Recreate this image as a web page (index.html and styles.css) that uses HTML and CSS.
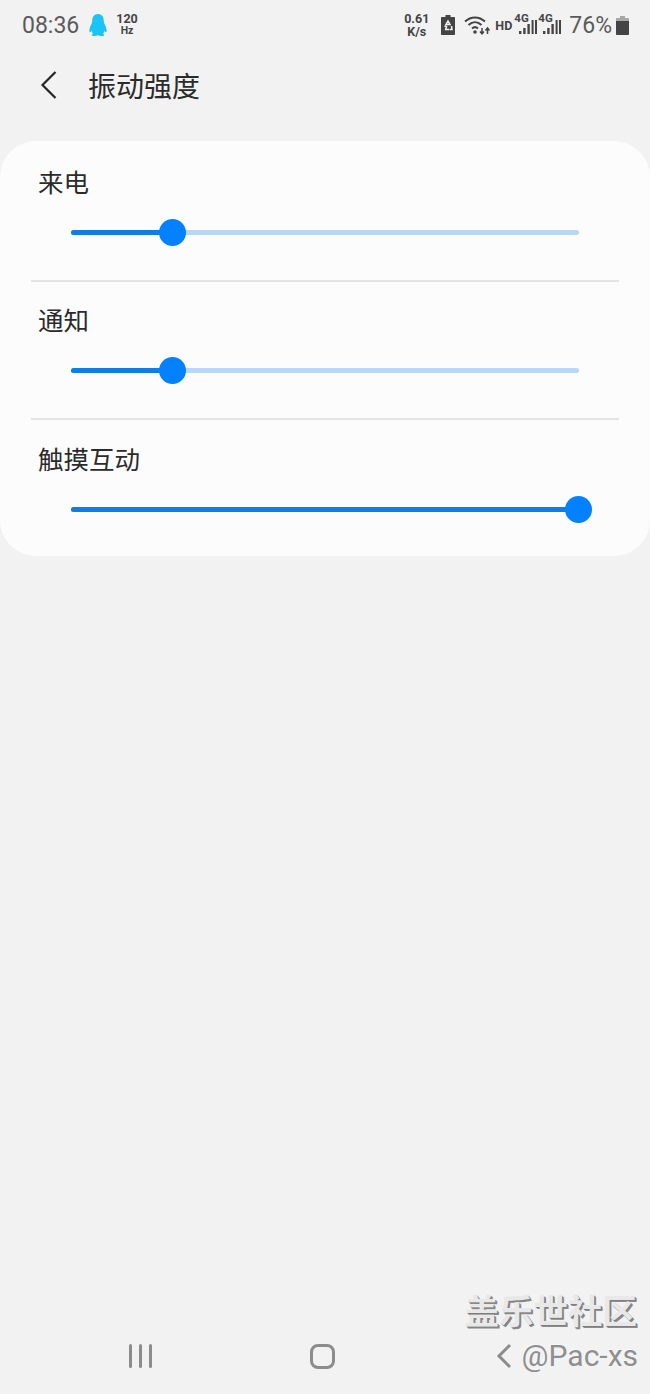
FILE: index.html
```html
<!DOCTYPE html>
<html lang="zh-CN">
  <head>
    <meta charset="UTF-8" />
    <title>振动强度</title>
    <link rel="stylesheet" href="styles.css">
  </head>
  <body>
    <div class="statusbar">
      <div class="status-left">
        <span class="time">08:36</span>
        <svg class="qq" viewBox="0 0 20 24" width="20" height="24">
          <path d="M10 1C6 1 4.300 4 4.200 8C4.100 9.500 3.800 10.500 3 12C2 14 1 16.500 1.500 19C2 19.800 3 18.800 3.500 17.800C3.800 19 4.300 20 5 20.700C4 21.200 3.500 21.800 4 22.500C5 23.300 8 23.200 9.800 22.300C11.800 23.200 15 23.300 16 22.500C16.500 21.800 16 21.200 15 20.700C15.700 20 16.200 19 16.500 17.800C17 18.800 18 19.800 18.500 19C19 16.500 18 14 17 12C16.200 10.500 15.900 9.500 15.800 8C15.700 4 14 1 10 1Z" fill="#1cc4f5"/>
        </svg>
        <span class="stacked hz"><b>120</b><b class="small">Hz</b></span>
      </div>
      <div class="status-right">
        <span class="stacked speed"><b>0.61</b><b>K/s</b></span>
        <svg class="saver" viewBox="0 0 14 20" width="14" height="20">
          <path d="M4.500 0H9.500V2H13C13.600 2 14 2.400 14 3V19C14 19.600 13.600 20 13 20H1C0.400 20 0 19.600 0 19V3C0 2.400 0.400 2 1 2H4.500Z" fill="#444"/>
          <path d="M7 6L9 9.500H5ZM3.500 11L5.500 11.500L4.700 14.500H8.500M10.500 11L11 14.500H9" fill="none" stroke="#f2f2f2" stroke-width="1.500"/>
        </svg>
        <svg class="wifi" viewBox="0 0 26 20" width="26" height="20">
          <path d="M1 6.500C7 1 15 1 21 6.500M4.500 10C8.500 6.300 13.500 6.300 17.500 10M8 13.500C10 11.700 12 11.700 14 13.500" fill="none" stroke="#444" stroke-width="2"/>
          <circle cx="11" cy="17" r="1.800" fill="#444"/>
          <path d="M18 13V18.500M16 16.500L18 18.800L20 16.500M23.500 19V13.500M21.500 15.500L23.500 13L25.500 15.500" fill="none" stroke="#444" stroke-width="1.500"/>
        </svg>
        <b class="hd">HD</b>
        <span class="signal">
          <b class="net">4G</b>
          <svg viewBox="0 0 22 20" width="22" height="20">
            <path d="M4 16h2.400v3H4zM8.200 13h2.400v6H8.200zM12.400 9h2.400v10h-2.400zM16.600 5h2v14h-2zM20 5h2v14h-2z" fill="#444"/>
          </svg>
        </span>
        <span class="signal">
          <b class="net">4G</b>
          <svg viewBox="0 0 22 20" width="22" height="20">
            <path d="M4 16h2.400v3H4zM8.200 13h2.400v6H8.200zM12.400 9h2.400v10h-2.400zM16.600 5h2v14h-2zM20 5h2v14h-2z" fill="#444"/>
          </svg>
        </span>
        <span class="percent">76%</span>
        <svg class="battery" viewBox="0 0 13 19" width="13" height="19">
          <path d="M4 0H9V2H4Z" fill="#a8a8a8"/>
          <path d="M1 2H12C12.600 2 13 2.400 13 3V5H0V3C0 2.400 0.400 2 1 2Z" fill="#a8a8a8"/>
          <path d="M0 5H13V18C13 18.600 12.600 19 12 19H1C0.400 19 0 18.600 0 18Z" fill="#444"/>
        </svg>
      </div>
    </div>

    <div class="header">
      <svg class="back" viewBox="0 0 18 30" width="18" height="30">
        <path d="M15.500 2L2.500 15L15.500 28" fill="none" stroke="#262626" stroke-width="2.200"/>
      </svg>
      <h1>振动强度</h1>
    </div>

    <div class="card">
      <div class="row first">
        <div class="label">来电</div>
        <div class="slider">
          <div class="fill" style="width: 20%"><span class="thumb"></span></div>
        </div>
      </div>
      <div class="row">
        <div class="label">通知</div>
        <div class="slider">
          <div class="fill" style="width: 20%"><span class="thumb"></span></div>
        </div>
      </div>
      <div class="row last">
        <div class="label">触摸互动</div>
        <div class="slider">
          <div class="fill" style="width: 100%"><span class="thumb"></span></div>
        </div>
      </div>
    </div>

    <div class="spacer"></div>

    <div class="navbar">
      <div class="recents"><span></span><span></span><span></span></div>
      <div class="home"></div>
    </div>

    <div class="watermark">
      <div class="wm-title">盖乐世社区</div>
      <div class="wm-user">
        <svg viewBox="0 0 16 26" width="16" height="26">
          <path d="M14 2L3 13L14 24" fill="none" stroke="#8c8c8c" stroke-width="3"/>
        </svg>
        <span>@Pac-xs</span>
      </div>
    </div>
  </body>
</html>
```

FILE: styles.css
```css
/* Basic styles */
html,
body {
  margin: 0;
  padding: 0;
}

body {
  width: 650px;
  height: 1394px;
  position: relative;
  overflow: hidden;
  display: flex;
  flex-direction: column;
  background-color: #f2f2f2;
  color: #2b2b2b;
  font-family: "Noto Sans CJK SC", "Roboto", sans-serif;
}

/* Status bar */
.statusbar {
  height: 50px;
  padding: 0 21px 0 22px;
  display: flex;
  justify-content: space-between;
  align-items: center;
  color: #444;
  font-family: "Roboto", sans-serif;
}

.status-left,
.status-right {
  display: flex;
  align-items: center;
}

.time {
  font-size: 23px;
  color: #5a5a5a;
}

.qq {
  margin-left: 9px;
}

.stacked {
  display: flex;
  flex-direction: column;
  align-items: center;
  font-size: 12.500px;
  line-height: 13px;
}

.hz {
  margin-left: 8px;
  margin-top: -2px;
  line-height: 12px;
}

.hz .small {
  font-size: 10.500px;
  line-height: 11px;
}

.speed {
  margin-top: -1px;
}

.saver {
  margin-left: 12px;
}

.wifi {
  margin-left: 9px;
}

.hd {
  margin-left: 5px;
  font-size: 12.500px;
}

.signal {
  position: relative;
  width: 22px;
  height: 20px;
  margin-left: 2px;
  display: block;
}

.hd + .signal {
  margin-left: 3px;
}

.net {
  position: absolute;
  left: -1px;
  top: -3px;
  font-size: 11.500px;
  line-height: 13px;
}

.percent {
  margin-left: 8px;
  font-size: 23px;
  color: #5a5a5a;
}

.battery {
  margin-left: 4px;
}

/* Header */
.header {
  height: 69px;
  padding-left: 40px;
  display: flex;
  align-items: center;
}

.back {
  margin-right: 30px;
}

h1 {
  margin: 0;
  font-size: 28px;
  font-weight: 400;
}

/* Card */
.card {
  margin-top: 22px;
  height: 415px;
  box-sizing: border-box;
  background-color: #fcfcfc;
  border-radius: 36px;
  padding: 0 31px;
}

.row {
  height: 138px;
  box-sizing: border-box;
  border-bottom: 2px solid #e4e4e4;
  padding-top: 18px;
}

.row.first {
  height: 141px;
  padding-top: 21px;
}

.row.last {
  height: 136px;
  border-bottom: none;
  padding-top: 19px;
}

.label {
  padding-left: 7px;
  font-size: 25.500px;
  line-height: 38px;
}

.slider {
  margin: 30px 40px 0;
  height: 5px;
  border-radius: 3px;
  background-color: #b8d6f7;
}

.fill {
  position: relative;
  height: 5px;
  border-radius: 3px;
  background-color: #0f7ce8;
}

.thumb {
  position: absolute;
  right: -13px;
  top: -11px;
  width: 27px;
  height: 27px;
  border-radius: 50%;
  background-color: #0381fe;
}

.spacer {
  flex: 1;
}

/* Navigation bar */
.navbar {
  height: 76px;
  padding-left: 129px;
  padding-top: 26px;
  box-sizing: border-box;
  display: flex;
  align-items: flex-start;
}

.recents {
  width: 23px;
  height: 24px;
  display: flex;
  justify-content: space-between;
}

.recents span {
  width: 3px;
  height: 24px;
  border-radius: 2px;
  background-color: #8c8c8c;
}

.home {
  margin-left: 158px;
  width: 25px;
  height: 25px;
  box-sizing: border-box;
  border: 3px solid #8c8c8c;
  border-radius: 8px;
}

/* Watermark */
.watermark {
  position: absolute;
  right: 13px;
  top: 1288px;
  text-align: right;
  color: #e8e8e8;
}

.wm-title {
  font-size: 34.500px;
  line-height: 42px;
  font-weight: 700;
  text-shadow: 1px 1px 0 #7f7f7f, 2px 2px 0 #8c8c8c;
}

.wm-user {
  margin-top: 6px;
  margin-right: -1px;
  display: flex;
  justify-content: flex-end;
  align-items: center;
  gap: 10px;
  font-family: "Roboto", sans-serif;
  font-size: 30px;
  line-height: 40px;
  color: #8f8f8f;
  text-shadow: -1px -1px 0 #f8f8f8;
}
```
